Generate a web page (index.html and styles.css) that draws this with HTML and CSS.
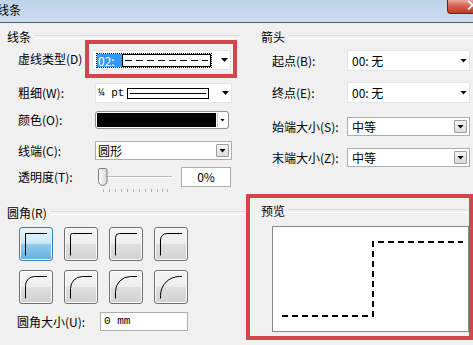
FILE: index.html
```html
<!DOCTYPE html>
<html lang="zh-CN">
<head>
  <meta charset="UTF-8">
  <meta name="viewport" content="width=device-width, initial-scale=1.0">
  <title>线条</title>
  <link rel="stylesheet" href="styles.css">
</head>
<body>
  <div class="titlebar">
    <span class="title">线条</span>
    <span class="close">×</span>
  </div>

  <div class="dialog">
    <div class="col-left">
      <div class="group-head"><span>线条</span></div>

      <div class="row row-dash">
        <label>虚线类型(D)</label>
        <div class="mark">
          <div class="combo flat">
            <span class="focus">
              <span class="sel">02:</span>
              <span class="sample">
                <svg width="87" height="11" viewBox="0 0 87 11">
                  <line x1="2" y1="5.5" x2="85" y2="5.5" stroke="#000" stroke-dasharray="7 4"/>
                </svg>
              </span>
            </span>
            <i class="arrow"></i>
          </div>
        </div>
      </div>

      <div class="row row-weight">
        <label>粗细(W):</label>
        <div class="combo flat wide">
          <span class="mono weight">¼ pt</span>
          <span class="sample solid"><b></b></span>
          <i class="arrow"></i>
        </div>
      </div>

      <div class="row row-color">
        <label>颜色(O):</label>
        <div class="color-combo">
          <span class="swatch"></span>
          <span class="color-btn"><i class="arrow small"></i></span>
        </div>
      </div>

      <div class="row row-cap">
        <label>线端(C):</label>
        <div class="combo boxed wide">
          <span class="text">圆形</span>
          <span class="drop"><i class="arrow"></i></span>
        </div>
      </div>

      <div class="row row-alpha">
        <label>透明度(T):</label>
        <svg class="slider" width="86" height="26" viewBox="0 0 86 26">
          <defs>
            <linearGradient id="thumb" x1="0" x2="1" y1="0" y2="0">
              <stop offset="0" stop-color="#fdfdfd"/>
              <stop offset="1" stop-color="#d6d6d6"/>
            </linearGradient>
          </defs>
          <line x1="12" y1="9.5" x2="77" y2="9.5" stroke="#b9b9b9"/>
          <line x1="12" y1="10.5" x2="77" y2="10.5" stroke="#ffffff"/>
          <path d="M3.5 3 Q3.5 1.5 5 1.5 H10.5 Q12 1.5 12 3 V13.5 Q12 18 7.75 18.5 Q3.5 18 3.5 13.5 Z" fill="url(#thumb)" stroke="#7c7c7c"/>
          <path d="M8.5 22v3M14.5 22v3M20.5 22v3M26.5 22v3M32.5 22v3M38.5 22v3M44.5 22v3M50.5 22v3M56.5 22v3M62.5 22v3M67.5 22v3M72.5 22v3" stroke="#b4b4b4"/>
        </svg>
        <div class="pct">0%</div>
      </div>

      <div class="group-head head-corner"><span>圆角(R)</span></div>

      <div class="corners">
        <button class="corner on"><svg width="32" height="32" viewBox="0 0 32 32"><path d="M27 5.5 H5.5 V27.5"/></svg></button>
        <button class="corner"><svg width="32" height="32" viewBox="0 0 32 32"><path d="M27 5.5 H7.5 A2 2 0 0 0 5.5 7.5 V27.5"/></svg></button>
        <button class="corner"><svg width="32" height="32" viewBox="0 0 32 32"><path d="M27 5.5 H9.5 A4 4 0 0 0 5.5 9.5 V27.5"/></svg></button>
        <button class="corner"><svg width="32" height="32" viewBox="0 0 32 32"><path d="M27 5.5 H12 A6.5 6.5 0 0 0 5.5 12 V27.5"/></svg></button>
        <button class="corner"><svg width="32" height="32" viewBox="0 0 32 32"><path d="M27 5.5 H14.5 A9 9 0 0 0 5.5 14.5 V27.5"/></svg></button>
        <button class="corner"><svg width="32" height="32" viewBox="0 0 32 32"><path d="M27 5.5 H17.5 A12 12 0 0 0 5.5 17.5 V27.5"/></svg></button>
        <button class="corner"><svg width="32" height="32" viewBox="0 0 32 32"><path d="M27 5.5 H20.5 A15 15 0 0 0 5.5 20.5 V27.5"/></svg></button>
        <button class="corner"><svg width="32" height="32" viewBox="0 0 32 32"><path d="M27 5.5 H24.5 A19 19 0 0 0 5.5 24.5 V27.5"/></svg></button>
      </div>

      <div class="row row-size">
        <label>圆角大小(U):</label>
        <div class="field mono">0 mm</div>
      </div>
    </div>

    <div class="col-right">
      <div class="group-head"><span>箭头</span></div>

      <div class="row row-begin">
        <label>起点(B):</label>
        <div class="combo flat arrow-combo">
          <span class="text">00: 无</span>
          <i class="arrow"></i>
        </div>
      </div>

      <div class="row row-end">
        <label>终点(E):</label>
        <div class="combo flat arrow-combo">
          <span class="text">00: 无</span>
          <i class="arrow"></i>
        </div>
      </div>

      <div class="row row-bsize">
        <label>始端大小(S):</label>
        <div class="combo boxed arrow-combo">
          <span class="text">中等</span>
          <span class="drop"><i class="arrow"></i></span>
        </div>
      </div>

      <div class="row row-esize">
        <label>末端大小(Z):</label>
        <div class="combo boxed arrow-combo">
          <span class="text">中等</span>
          <span class="drop"><i class="arrow"></i></span>
        </div>
      </div>

      <div class="preview-mark">
        <div class="group-head"><span>预览</span></div>
        <div class="preview">
          <svg width="195" height="104" viewBox="0 0 195 104">
            <path d="M9 89 H100 V15 H190" fill="none" stroke="#000" stroke-width="2" stroke-dasharray="6 4"/>
          </svg>
        </div>
      </div>
    </div>
  </div>
</body>
</html>
```

FILE: styles.css
```css
* {
  box-sizing: border-box;
}

body {
  margin: 0;
  width: 473px;
  height: 345px;
  overflow: hidden;
  background: #f0f0f0;
  font-family: "Noto Sans CJK SC", "Noto Sans", sans-serif;
  font-size: 12px;
  color: #000;
}

/* Title bar */
.titlebar {
  height: 23px;
  display: flex;
  align-items: flex-start;
  background: linear-gradient(#bfd3e8, #cbddef);
  border-bottom: 1px solid #4f5d6d;
}

.title {
  margin: 3px 0 0 -3px;
  line-height: 14px;
}

.close {
  margin-left: auto;
  width: 26px;
  height: 14px;
  padding-left: 17px;
  background: linear-gradient(#eaa99b, #d65a4a 50%, #c13b2b);
  border-left: 1px solid #5c2a24;
  border-bottom: 1px solid #5c2a24;
  border-radius: 0 0 0 4px;
  color: #fff;
  font-size: 15px;
  font-weight: bold;
  line-height: 10px;
  overflow: hidden;
}

/* Columns */
.dialog {
  display: flex;
}

.col-left {
  width: 240px;
  flex: none;
}

.col-right {
  flex: 1;
}

/* Group headers */
.group-head {
  display: flex;
  align-items: center;
  height: 14px;
  line-height: 14px;
  margin-top: 7px;
}

.group-head span {
  padding: 0 3px 0 7px;
}

.group-head::after {
  content: "";
  flex: 1;
  height: 2px;
  border-top: 1px solid #d5dfe5;
  border-bottom: 1px solid #ffffff;
}

.col-right > .group-head span {
  padding-left: 21px;
}

.head-corner {
  margin-top: 19px;
  margin-right: -6px;
}

/* Rows */
.row {
  display: flex;
  align-items: center;
  padding-left: 18px;
}

.row label {
  width: 77px;
  flex: none;
  line-height: 14px;
}

.mono {
  font-family: "Liberation Mono", monospace;
  font-size: 11px;
}

.arrow {
  display: block;
  width: 7px;
  height: 4px;
  background: #000;
  clip-path: polygon(0 0, 100% 0, 50% 100%);
}

.arrow.small {
  width: 5px;
  height: 3px;
}

.combo {
  display: flex;
  align-items: center;
  height: 20px;
  background: #fff;
}

.combo.flat {
  border: 1px solid #e4e4e4;
}

.combo.flat .arrow {
  margin-left: auto;
  margin-right: 2px;
}

.combo.boxed {
  border: 1px solid #abadb3;
}

.combo .text {
  padding-left: 2px;
}

.drop {
  margin-left: auto;
  margin-right: 2px;
  width: 13px;
  height: 13px;
  display: flex;
  align-items: center;
  justify-content: center;
  border: 1px solid #9c9c9c;
  border-radius: 1px;
  background: linear-gradient(#f6f6f6, #dcdcdc);
}

.drop .arrow {
  width: 7px;
  height: 4px;
}

/* 虚线类型 */
.row-dash {
  margin-top: -4px;
  height: 38px;
}

.mark {
  width: 152px;
  height: 38px;
  margin-left: -10px;
  padding: 6px 2px 4px 3px;
  border: 4px solid #d6454b;
}

.mark .combo {
  width: 139px;
  padding-left: 4px;
}

.focus {
  display: flex;
  outline: 1px dotted #000;
}

.sel {
  width: 25px;
  height: 13px;
  padding-left: 1px;
  line-height: 13px;
  background: #3399ff;
  color: #fff;
}

.sample {
  display: block;
  border: 1px solid #000;
  background: #fff;
}

.focus .sample {
  width: 89px;
  height: 13px;
}

.focus .sample svg {
  display: block;
}

/* 粗细 */
.row-weight {
  margin-top: 5px;
}

.combo.wide {
  width: 137px;
}

.weight {
  width: 31px;
  padding-left: 2px;
}

.sample.solid {
  width: 82px;
  height: 11px;
  padding: 4px 2px 0;
}

.sample.solid b {
  display: block;
  height: 1px;
  background: #000;
}

/* 颜色 */
.row-color {
  margin-top: 8px;
}

.color-combo {
  display: flex;
  width: 134px;
  height: 18px;
  padding: 1px;
  border: 1px solid #8e8f8f;
  border-radius: 3px;
  background: #fff;
}

.swatch {
  flex: 1;
  background: #000;
}

.color-btn {
  width: 10px;
  display: flex;
  align-items: center;
  justify-content: center;
  border-left: 1px solid #c8c8c8;
  margin-left: 1px;
}

/* 线端 */
.row-cap {
  margin-top: 12px;
}

.row-cap .combo {
  height: 19px;
}

/* 透明度 */
.row-alpha {
  margin-top: 7px;
  height: 20px;
  align-items: flex-start;
}

.row-alpha label {
  line-height: 20px;
}

.slider {
  display: block;
  flex: none;
  margin-bottom: -6px;
}

.pct {
  width: 50px;
  height: 20px;
  line-height: 18px;
  text-align: center;
  border: 1px solid #abadb3;
  background: #fff;
}

/* 圆角 */
.corners {
  display: grid;
  grid-template-columns: repeat(4, 34px);
  grid-auto-rows: 34px;
  column-gap: 11px;
  row-gap: 9px;
  margin-top: 7px;
  padding-left: 19px;
}

.corner {
  padding: 0;
  width: 34px;
  height: 34px;
  border: 1px solid #707070;
  border-radius: 3px;
  background: linear-gradient(#f5f5f5 0%, #eeeeee 48%, #dedede 52%, #d2d2d2 100%);
  box-shadow: inset 0 0 0 1px #fbfbfb;
}

.corner.on {
  border-color: #3c7fb1;
  background: linear-gradient(#e6f4fc 0%, #cce8f8 48%, #8fcbee 52%, #64b0de 100%);
  box-shadow: inset 0 0 0 1px #e8f5fd;
}

.corner svg {
  display: block;
}

.corner path {
  fill: none;
  stroke: #000;
  stroke-width: 1;
}

.row-size {
  margin-top: 8px;
  padding-left: 17px;
}

.row-size label {
  width: 83px;
}

.field {
  width: 88px;
  height: 19px;
  line-height: 17px;
  padding-left: 3px;
  border: 1px solid #abadb3;
  background: #fff;
}

/* 箭头 */
.col-right .row {
  padding-left: 32px;
}

.col-right .row label {
  width: 75px;
}

.arrow-combo {
  width: 123px;
}

.arrow-combo .text {
  padding-left: 4px;
}

.row-begin {
  margin-top: 6px;
}

.row-begin .combo,
.row-end .combo {
  height: 21px;
}

.row-begin .arrow,
.row-end .arrow {
  margin-right: 3px;
}

.row-end {
  margin-top: 11px;
}

.row-bsize {
  margin-top: 14px;
}

.row-esize {
  margin-top: 12px;
}

.row-bsize .combo,
.row-esize .combo {
  height: 19px;
}

/* 预览 */
.preview-mark {
  margin: 27px 0 0 6px;
  width: 227px;
  height: 146px;
  border: 4px solid #d6454b;
}

.preview-mark .group-head {
  margin-top: 6px;
}

.preview-mark .group-head span {
  padding-left: 11px;
}

.preview {
  margin: 8px 0 0 22px;
  width: 197px;
  height: 106px;
  border: 1px solid #888;
  background: #fff;
}

.preview svg {
  display: block;
}
```
